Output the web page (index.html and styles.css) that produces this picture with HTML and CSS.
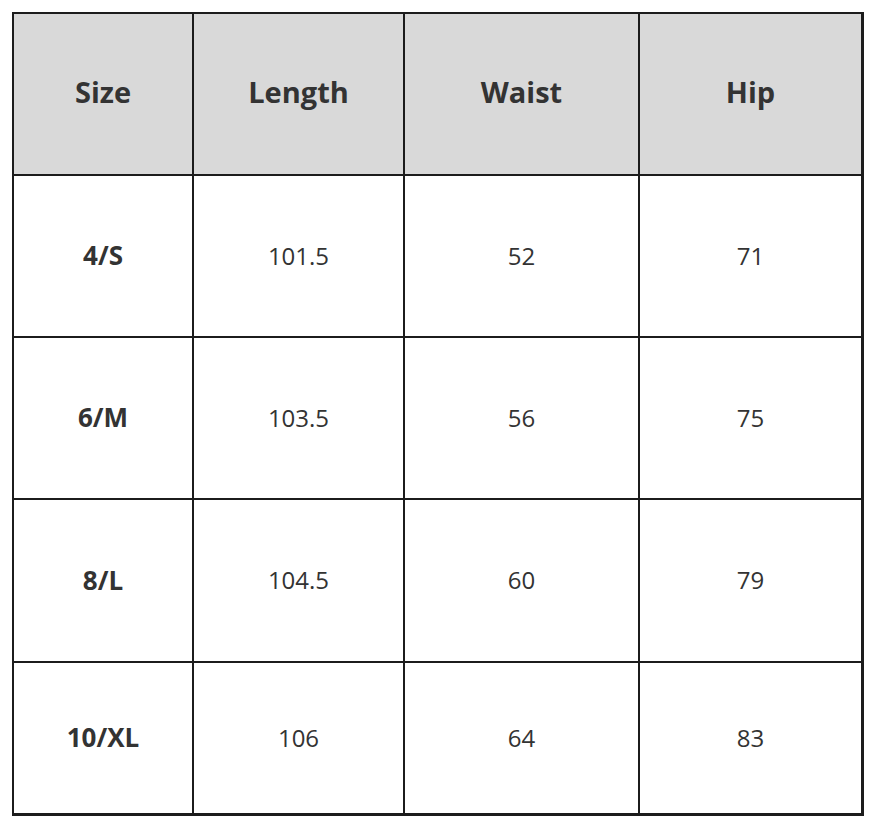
FILE: index.html
```html
<!DOCTYPE html>
<html>
<head>
<meta charset="utf-8">
<link rel="stylesheet" href="styles.css">
</head>
<body>
<div class="table">
  <div class="cell head">Size</div>
  <div class="cell head">Length</div>
  <div class="cell head">Waist</div>
  <div class="cell head last">Hip</div>

  <div class="cell rh">4/S</div>
  <div class="cell">101.5</div>
  <div class="cell">52</div>
  <div class="cell last">71</div>

  <div class="cell rh">6/M</div>
  <div class="cell">103.5</div>
  <div class="cell">56</div>
  <div class="cell last">75</div>

  <div class="cell rh">8/L</div>
  <div class="cell">104.5</div>
  <div class="cell">60</div>
  <div class="cell last">79</div>

  <div class="cell rh bottom">10/XL</div>
  <div class="cell bottom">106</div>
  <div class="cell bottom">64</div>
  <div class="cell last bottom">83</div>
</div>
</body>
</html>
```
FILE: styles.css
```css
html, body {
  margin: 0;
  padding: 0;
  background: #ffffff;
}
body {
  padding: 12px 0 0 12px;
  font-family: "Open Sans", "DejaVu Sans", sans-serif;
  color: #333333;
}
.table {
  display: grid;
  grid-template-columns: 180px 211px 235px 224px;
  grid-template-rows: 162px 162px 162px 163px 153px;
  width: max-content;
  border-left: 2px solid #1c1c1c;
  border-top: 2px solid #1c1c1c;
}
.cell {
  display: flex;
  align-items: center;
  justify-content: center;
  border-right: 2px solid #1c1c1c;
  border-bottom: 2px solid #1c1c1c;
  font-size: 24px;
  padding-bottom: 2px;
}
.cell.last {
  border-right-width: 3px;
}
.cell.bottom {
  border-bottom-width: 3px;
}
.head {
  background: #d9d9d9;
  font-weight: 700;
  font-size: 29px;
  padding-bottom: 6px;
}
.rh {
  font-weight: 700;
  font-size: 26px;
}
```
